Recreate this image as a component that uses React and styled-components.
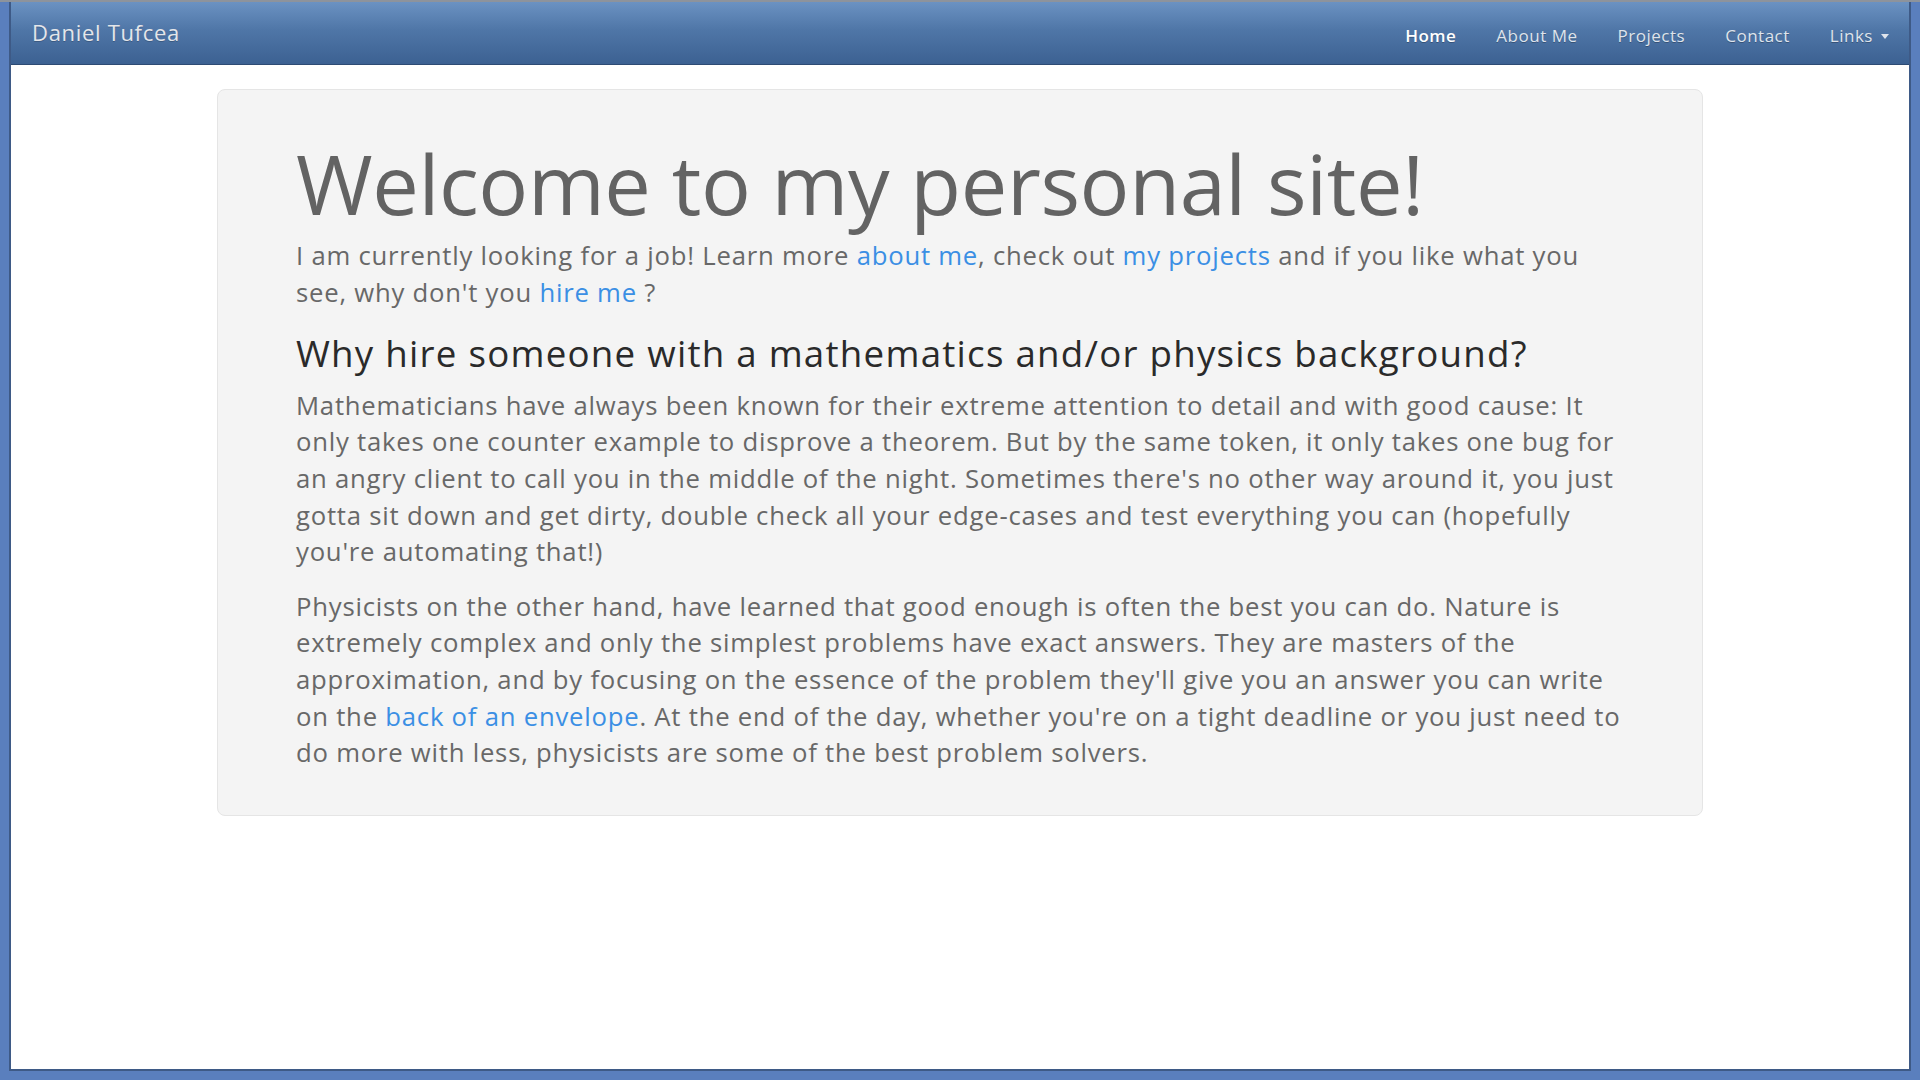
import React from "react";
import styled, { createGlobalStyle } from "styled-components";

const Global = createGlobalStyle`
  html, body { margin: 0; padding: 0; }
  body {
    font-family: "Open Sans", "Noto Sans", "DejaVu Sans", sans-serif;
    background: #5a7fbd;
  }
  * { box-sizing: border-box; }
`;

const Frame = styled.div`
  width: 1920px;
  height: 1080px;
  background: #5a7fbd;
  border-top: 2px solid #8d939c;
  padding: 0 9px 9px 9px;
  display: flex;
`;

const Window = styled.div`
  flex: 1;
  background: #ffffff;
  border: 2px solid #3e5a86;
  border-top: none;
  display: flex;
  flex-direction: column;
  overflow: hidden;
`;

const Navbar = styled.nav`
  height: 63px;
  flex: none;
  display: flex;
  align-items: center;
  justify-content: space-between;
  padding: 0 0 0 21px;
  background: linear-gradient(to bottom, #6b92c2 0%, #4f76a7 45%, #3c6192 100%);
  border-bottom: 1px solid #2d4b74;
`;

const Brand = styled.a`
  font-size: 22px;
  letter-spacing: 0.031em;
  color: #e4e6ea;
  text-decoration: none;
  text-shadow: 0 1px 0 rgba(0, 0, 0, 0.2);
  margin-top: -2px;
`;

const NavList = styled.ul`
  list-style: none;
  margin: 0;
  padding: 4px 0 0 0;
  display: flex;
  align-items: center;
`;

const NavLink = styled.a`
  display: flex;
  align-items: center;
  padding: 0 20px;
  font-size: 17px;
  letter-spacing: 0.51px;
  text-decoration: none;
  color: ${(p) => (p.$active ? "#ffffff" : "#dfe4ec")};
  font-weight: ${(p) => (p.$active ? 600 : 400)};
  text-shadow: 0 1px 0 rgba(0, 0, 0, 0.25);
`;

const Caret = styled.span`
  display: inline-block;
  width: 0;
  height: 0;
  margin-left: 8px;
  margin-top: 2px;
  border-top: 5px solid #dfe4ec;
  border-left: 4px solid transparent;
  border-right: 4px solid transparent;
`;

const Main = styled.main`
  display: flex;
  justify-content: center;
  padding-top: 24px;
`;

const Jumbotron = styled.section`
  width: 1486px;
  background: #f4f4f4;
  border: 1px solid #e5e5e5;
  border-radius: 8px;
  padding: 47px 78px 43px 78px;
`;

const Title = styled.h1`
  margin: 0 0 10px 0;
  font-size: 83px;
  line-height: 1.1;
  font-weight: 400;
  letter-spacing: -0.4px;
  color: #636363;
`;

const Lead = styled.p`
  margin: ${(p) => p.$margin || "0"};
  font-size: 25.7px;
  line-height: 36.6px;
  letter-spacing: 0.03em;
  color: #686868;
`;

const Subtitle = styled.h2`
  margin: 22px 0 14px 0;
  font-size: 36.7px;
  line-height: 1.1;
  font-weight: 400;
  letter-spacing: 0.034em;
  color: #2a2a2a;
`;

const Link = styled.a`
  color: #3b8fe4;
  text-decoration: none;
`;

export default function App() {
  return (
    <>
      <Global />
      <Frame>
        <Window>
          <Navbar>
            <Brand href="#">Daniel Tufcea</Brand>
            <NavList>
              <li><NavLink href="#" $active>Home</NavLink></li>
              <li><NavLink href="#">About Me</NavLink></li>
              <li><NavLink href="#">Projects</NavLink></li>
              <li><NavLink href="#">Contact</NavLink></li>
              <li><NavLink href="#">Links<Caret /></NavLink></li>
            </NavList>
          </Navbar>
          <Main>
            <Jumbotron>
              <Title>Welcome to my personal site!</Title>
              <Lead>
                I am currently looking for a job! Learn more <Link href="#">about me</Link>, check out{" "}
                <Link href="#">my projects</Link> and if you like what you see, why don't you{" "}
                <Link href="#">hire me</Link> ?
              </Lead>
              <Subtitle>Why hire someone with a mathematics and/or physics background?</Subtitle>
              <Lead $margin="0 0 18px 0">
                Mathematicians have always been known for their extreme attention to detail and with good cause: It
                only takes one counter example to disprove a theorem. But by the same token, it only takes one bug for
                an angry client to call you in the middle of the night. Sometimes there's no other way around it, you just
                gotta sit down and get dirty, double check all your edge-cases and test everything you can (hopefully
                you're automating that!)
              </Lead>
              <Lead>
                Physicists on the other hand, have learned that good enough is often the best you can do. Nature is
                extremely complex and only the simplest problems have exact answers. They are masters of the
                approximation, and by focusing on the essence of the problem they'll give you an answer you can write
                on the <Link href="#">back of an envelope</Link>. At the end of the day, whether you're on a tight deadline or you just need to
                do more with less, physicists are some of the best problem solvers.
              </Lead>
            </Jumbotron>
          </Main>
        </Window>
      </Frame>
    </>
  );
}
